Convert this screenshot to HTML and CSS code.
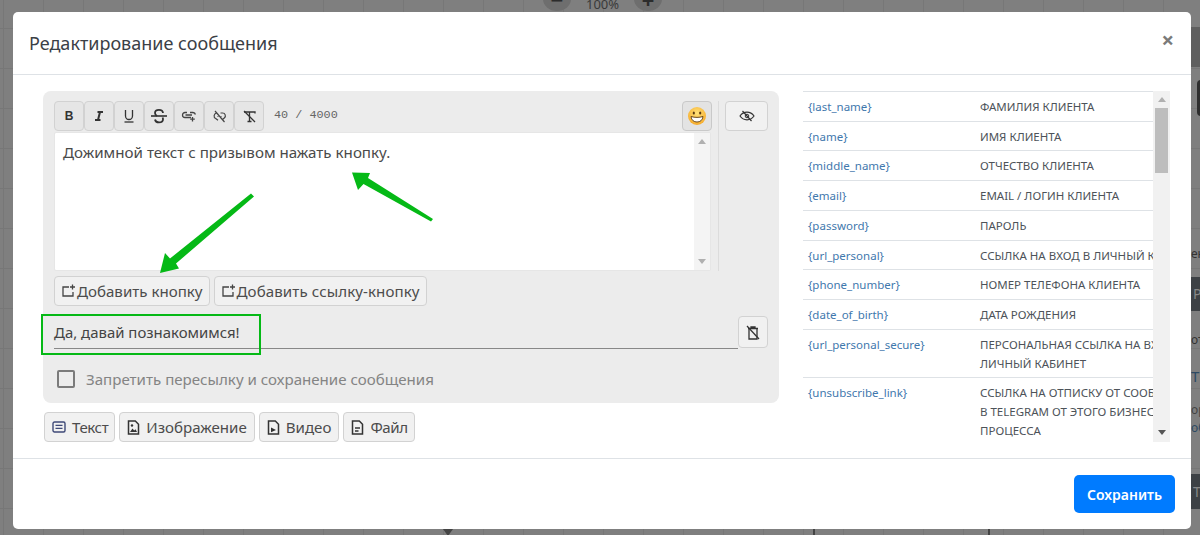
FILE: index.html
```html
<!DOCTYPE html>
<html lang="ru">
<head>
<meta charset="utf-8">
<title>Редактирование сообщения</title>
<link rel="stylesheet" href="styles.css">
</head>
<body>
<div class="backdrop">
  <div class="bg-zoom"><span class="bg-circle">−</span><span class="bg-pct">100%</span><span class="bg-circle">+</span></div>
  <div class="bg-band b1"></div>
  <div class="bg-pill"></div>
  <div class="bg-text t0">ек</div>
  <div class="bg-band b2">Р</div>
  <div class="bg-text t1">от</div>
  <div class="bg-text t2">Т</div>
  <div class="bg-text t3">ор</div>
  <div class="bg-text t4">об</div>
  <div class="bg-band b3">Т</div>
  <div class="bg-tri"></div>
  <div class="bg-tick k1"></div>
  <div class="bg-tick k2"></div>
</div>
<main class="modal">
  <header class="modal-head">
    <h1 class="modal-title">Редактирование сообщения</h1>
    <span class="close">×</span>
  </header>
  <section class="modal-body">
    <div class="col-left">
      <div class="panel">
        <div class="panel-top">
          <div class="editor-col">
            <div class="toolbar">
              <button class="tb"><b class="fb">B</b></button>
              <button class="tb"><svg width="14" height="14" viewBox="0 0 14 14"><path d="M5.500 3h5.500M3 11h5.500M8 3 6 11" fill="none" stroke="#333" stroke-width="2"/></svg></button>
              <button class="tb"><svg width="14" height="16" viewBox="0 0 14 16"><path d="M3.500 2v6a3.500 3.500 0 0 0 7 0V2" fill="none" stroke="#333" stroke-width="1.300"/><path d="M2.500 14h9" stroke="#333" stroke-width="1.300"/></svg></button>
              <button class="tb"><svg width="18" height="18" viewBox="0 0 18 18"><path d="M1 9h16" stroke="#333" stroke-width="1.600"/><path d="M13 6C12.800 3.800 11 2.800 9 2.800 6.500 2.800 5 4.200 5 6c0 1.300.8 2.200 2 3M5 12.500C5.300 14.500 7 15.400 9 15.400c2.500 0 4-1.400 4-3.200 0-.6-.2-1.200-.4-1.700" fill="none" stroke="#333" stroke-width="1.800"/></svg></button>
              <button class="tb"><svg width="16" height="12" viewBox="0 0 16 12"><path d="M6 2.500H4a2.500 2.500 0 0 0 0 5h6" fill="none" stroke="#444" stroke-width="1.300"/><path d="M4.500 5H11M9 2.500h3a2.500 2.500 0 0 1 2.400 2M11.500 7v4.500M9.200 9.200h4.600" fill="none" stroke="#444" stroke-width="1.300"/></svg></button>
              <button class="tb"><svg width="15" height="15" viewBox="0 0 15 15"><path d="M3 2l9.500 11" stroke="#444" stroke-width="1.200"/><path d="M4.500 4.200a2.800 2.800 0 0 0-.8 5.300l2.300 1.800M8.500 4h2a2.800 2.800 0 0 1 1.800 5L10.500 10.500M5.500 7.500h1M8.500 7.500h1" fill="none" stroke="#444" stroke-width="1.200"/></svg></button>
              <button class="tb"><svg width="15" height="15" viewBox="0 0 15 15"><path d="M2 3h11v1.500M7.500 3v9.500M5.500 12.500h4" fill="none" stroke="#333" stroke-width="1.300"/><path d="M2 2l11 11" stroke="#333" stroke-width="1.300"/></svg></button>
              <span class="counter">40 / 4000</span>
              <button class="tb emoji"><svg width="20" height="20" viewBox="0 0 20 20"><defs><radialGradient id="face" cx="50%" cy="35%" r="70%"><stop offset="0" stop-color="#ffe27a"/><stop offset="1" stop-color="#f5a623"/></radialGradient></defs><circle cx="10" cy="10" r="9" fill="url(#face)"/><ellipse cx="6.800" cy="7" rx="1.100" ry="1.600" fill="#5b3a10"/><ellipse cx="13.200" cy="7" rx="1.100" ry="1.600" fill="#5b3a10"/><path d="M4 10.500c3.800 1.200 8.200 1.200 12 0-.3 3.600-2.800 5.500-6 5.500s-5.700-1.900-6-5.500z" fill="#fff" stroke="#5b3a10" stroke-width=".9"/></svg></button>
            </div>
            <div class="editor">
              <p class="editor-text">Дожимной текст с призывом нажать кнопку.</p>
              <div class="ed-scroll"><i class="arr up"></i><i class="arr down"></i></div>
            </div>
          </div>
          <div class="preview-col">
            <button class="btn eye"><svg width="16" height="12" viewBox="0 0 16 12"><path d="M1 6c1.800-2.600 4-3.800 7-3.800s5.200 1.200 7 3.800c-1.800 2.600-4 3.800-7 3.800S2.800 8.600 1 6z" fill="none" stroke="#333" stroke-width="1.200"/><circle cx="8" cy="6" r="1.800" fill="none" stroke="#333" stroke-width="1"/><path d="M3.500 1l9 10" stroke="#333" stroke-width="1.200"/></svg></button>
          </div>
        </div>
        <div class="add-row">
          <button class="btn add"><svg class="add-ic" width="15" height="14" viewBox="0 0 15 14"><path d="M8 3H2v9h10V8" fill="none" stroke="#444" stroke-width="1.300"/><path d="M11.500 0.500v5M9 3h5" stroke="#444" stroke-width="1.300"/></svg>Добавить кнопку</button>
          <button class="btn add add-long"><svg class="add-ic" width="15" height="14" viewBox="0 0 15 14"><path d="M8 3H2v9h10V8" fill="none" stroke="#444" stroke-width="1.300"/><path d="M11.500 0.500v5M9 3h5" stroke="#444" stroke-width="1.300"/></svg>Добавить ссылку-кнопку</button>
        </div>
        <div class="input-row">
          <div class="btn-input">Да, давай познакомимся!</div>
          <button class="btn del"><svg width="14" height="15" viewBox="0 0 14 15"><path d="M2 3.500h10M5 3.500V2h4v1.500M3 3.500V14h8V3.500" fill="none" stroke="#333" stroke-width="1.300"/><path d="M1 1l12 13" stroke="#333" stroke-width="1.200"/></svg></button>
        </div>
        <label class="check-row"><span class="check"></span><span class="check-label">Запретить пересылку и сохранение сообщения</span></label>
      </div>
      <div class="types">
        <button class="btn type tight"><svg width="14" height="12" viewBox="0 0 14 12"><rect x="1" y="1" width="12" height="10" rx="1.500" fill="none" stroke="#3f4a78" stroke-width="1.400"/><path d="M3.500 4.300h7M3.500 7.300h7" stroke="#3f4a78" stroke-width="1.200"/></svg>Текст</button>
        <button class="btn type"><svg width="13" height="15" viewBox="0 0 13 15"><path d="M1.500 1h6.800l3.200 3.200V14h-10z" fill="none" stroke="#333" stroke-width="1.500"/><path d="M3 12l2.500-3.500 1.700 2 1.300-1.300L10 12z" fill="#333"/><circle cx="5" cy="5.500" r="1.200" fill="#333"/></svg>Изображение</button>
        <button class="btn type"><svg width="13" height="15" viewBox="0 0 13 15"><path d="M1.500 1h6.800l3.200 3.200V14h-10z" fill="none" stroke="#333" stroke-width="1.500"/><path d="M4 7.500l5 2.500-5 2.200z" fill="#333"/></svg>Видео</button>
        <button class="btn type tight"><svg width="13" height="15" viewBox="0 0 13 15"><path d="M1.500 1h6.800l3.200 3.200V14h-10z" fill="none" stroke="#333" stroke-width="1.500"/><path d="M4 8h5M4 11h3.500" stroke="#333" stroke-width="1.300"/></svg>Файл</button>
      </div>
      <div class="mark-box"></div>
    </div>
    <div class="col-right">
      <div class="vars">
        <div class="var"><a class="var-key">{last_name}</a><span class="var-val">ФАМИЛИЯ КЛИЕНТА</span></div>
        <div class="var"><a class="var-key">{name}</a><span class="var-val">ИМЯ КЛИЕНТА</span></div>
        <div class="var"><a class="var-key">{middle_name}</a><span class="var-val">ОТЧЕСТВО КЛИЕНТА</span></div>
        <div class="var"><a class="var-key">{email}</a><span class="var-val">EMAIL / ЛОГИН КЛИЕНТА</span></div>
        <div class="var"><a class="var-key">{password}</a><span class="var-val">ПАРОЛЬ</span></div>
        <div class="var"><a class="var-key">{url_personal}</a><span class="var-val">ССЫЛКА НА ВХОД В ЛИЧНЫЙ КАБИНЕТ</span></div>
        <div class="var"><a class="var-key">{phone_number}</a><span class="var-val">НОМЕР ТЕЛЕФОНА КЛИЕНТА</span></div>
        <div class="var"><a class="var-key">{date_of_birth}</a><span class="var-val">ДАТА РОЖДЕНИЯ</span></div>
        <div class="var"><a class="var-key">{url_personal_secure}</a><span class="var-val">ПЕРСОНАЛЬНАЯ ССЫЛКА НА ВХОД В<br>ЛИЧНЫЙ КАБИНЕТ</span></div>
        <div class="var"><a class="var-key">{unsubscribe_link}</a><span class="var-val">ССЫЛКА НА ОТПИСКУ ОТ СООБЩЕНИЙ<br>В TELEGRAM ОТ ЭТОГО БИЗНЕС-<br>ПРОЦЕССА</span></div>
      </div>
      <div class="vscroll"><i class="arr up"></i><div class="thumb"></div><i class="arr down dark"></i></div>
    </div>
  </section>
  <footer class="modal-foot"><button class="save">Сохранить</button></footer>
</main>
<svg class="arrows" width="1200" height="535" viewBox="0 0 1200 535">
  <path d="M433 219 368 178 370 173 352 172.500 358 190 363.500 184 431 221.500z" fill="#05b916"/>
  <path d="M254 196.500 176 263.500 179 268.500 160 273 165 253 170 258.500 251 193.500z" fill="#05b916"/>
</svg>
</body>
</html>
```

FILE: styles.css
```css
* { box-sizing: border-box; }
html, body { margin: 0; padding: 0; }
body {
  width: 1200px;
  height: 535px;
  overflow: hidden;
  background: #7f7f7f;
  font-family: "Noto Sans", "Open Sans", sans-serif;
  color: #495057;
  position: relative;
  padding: 12px 9px 6px 13px;
}
button { font-family: inherit; margin: 0; padding: 0; cursor: pointer; }

/* page dimmed behind the dialog */
.backdrop {
  position: absolute;
  inset: 0;
  overflow: hidden;
  background-image:
    linear-gradient(#777 1px, transparent 1px),
    linear-gradient(90deg, #777 1px, transparent 1px);
  background-size: 40px 40px;
  background-position: 0 28px, 3px 0;
}
.bg-zoom { position: absolute; left: 543px; top: -13px; height: 24px; display: flex; align-items: flex-start; gap: 15px; font-size: 14px; }
.bg-circle { width: 28px; height: 24px; border-radius: 50%; background: #6e6e6e; font-size: 22px; font-weight: 700; text-align: center; line-height: 24px; color: #2c2c2c; }
.bg-pct { color: #3a3a3a; font-size: 13px; line-height: 19px; margin-top: 8px; width: 33px; }
.bg-band { position: absolute; left: 1191px; width: 9px; background: #5f5f5f; font-size: 14px; padding-left: 2px; }
.b1 { top: 27px; height: 40px; }
.b2 { top: 277px; height: 34px; line-height: 34px; background: #3d4145; color: #888; }
.b3 { top: 474px; height: 35px; line-height: 35px; background: #3d4145; color: #888; }
.bg-pill { position: absolute; left: 1197px; top: 80px; width: 10px; height: 36px; border-radius: 4px; background: #2e2e2e; }
.bg-text { position: absolute; left: 1191px; color: #333; font-size: 12px; white-space: nowrap; }
.t0 { top: 245px; }
.t1 { top: 331px; }
.t2 { top: 366px; font-size: 15px; color: #2d4a63; }
.t3 { top: 401px; color: #444; }
.t4 { top: 419px; color: #2d4a63; }
.bg-tri { position: absolute; left: 443px; top: 529px; border: 5px solid transparent; border-top: 7px solid #444; border-bottom: 0; }
.bg-tick { position: absolute; top: 529px; width: 2px; height: 6px; background: #444; }
.k1 { left: 813px; }
.k2 { left: 988px; }

/* dialog */
.modal {
  position: relative;
  width: 1178px;
  height: 517px;
  background: #fff;
  border-radius: 5px;
  display: flex;
  flex-direction: column;
}
.modal-head {
  height: 63px;
  flex: none;
  border-bottom: 1px solid #dee2e6;
  display: flex;
  align-items: center;
  justify-content: space-between;
  padding: 0 17px 0 16px;
}
.modal-title { margin: 2px 0 0; font-size: 18px; font-weight: 400; color: #3b4046; line-height: 1.2; }
.close { font-size: 22px; font-weight: 700; color: #7a7a7a; line-height: 1; margin-bottom: 8px; }
.modal-body { flex: none; height: 384px; display: flex; padding: 16px 0 0 30px; gap: 24px; border-bottom: 1px solid #dee2e6; }
.modal-foot { flex: 1; display: flex; justify-content: flex-end; align-items: flex-start; padding: 16px 16px 0 0; }
.save { width: 101px; height: 38px; border: 0; border-radius: 5px; background: #007bff; color: #fff; font-size: 14px; font-weight: 600; }

/* left column */
.col-left { width: 736px; flex: none; position: relative; }
.panel { background: #ececec; border-radius: 8px; height: 312px; padding: 10px 11px 0; }
.panel-top { display: flex; height: 170px; }
.editor-col { width: 658px; flex: none; }
.toolbar { display: flex; height: 31px; align-items: flex-start; }
.tb { width: 30px; height: 30px; background: #e6e6e6; border: 1px solid #d2d2d2; border-radius: 4px; display: flex; align-items: center; justify-content: center; color: #333; }
.fb { font-size: 12px; font-weight: 700; font-family: "Liberation Sans", sans-serif; }
.counter { font-family: "Liberation Mono", monospace; font-size: 11.800px; color: #666; margin-left: 10px; line-height: 29px; flex: 1; }
.emoji { background: #e3e3e3; border-color: #c9c9c9; }
.editor { height: 139px; width: 657px; background: #fff; display: flex; justify-content: space-between; border: 1px solid #e6e6e6; border-radius: 2px; }
.editor-text { margin: 0; padding: 9px 8px; font-size: 15.150px; line-height: 20px; color: #4a4a4a; }
.ed-scroll { width: 16px; flex: none; background: #f4f4f4; display: flex; flex-direction: column; justify-content: space-between; padding: 6px 0; align-items: center; }
.arr { display: block; border: 4px solid transparent; }
.arr.up { border-top: 0; border-bottom: 5px solid #b0b0b0; }
.arr.down { border-bottom: 0; border-top: 5px solid #b0b0b0; }
.arr.dark { border-top-color: #555; }
.preview-col { flex: 1; margin-left: 6px; border-left: 1px solid #dcdcdc; padding-left: 6px; }
.btn { background: #f1f1f1; border: 1px solid #d2d2d2; border-radius: 4px; color: #495057; display: inline-flex; align-items: center; justify-content: center; }
.eye { width: 43px; height: 30px; }
.add-row { display: flex; gap: 4px; margin-top: 5px; }
.add { height: 30px; font-size: 15.100px; padding: 0 6px; color: #4c4c4c; }
.add-long { letter-spacing: .09px; }
.add-ic { margin-right: 1px; }
.input-row { display: flex; align-items: flex-start; margin-top: 10px; height: 33px; }
.btn-input { flex: 1; height: 33px; border-bottom: 1px solid #888; font-size: 14.950px; line-height: 33px; color: #444; }
.del { width: 30px; height: 32px; flex: none; }
.check-row { display: flex; align-items: center; margin: 20px 0 0 3px; }
.check { width: 18px; height: 18px; border: 2px solid #7b7b7b; border-radius: 2px; flex: none; }
.check-label { margin-left: 11px; font-size: 15.100px; color: #848484; line-height: 20px; }
.types { display: flex; gap: 4px; margin: 9px 0 0 1px; }
.type { height: 30px; font-size: 15.100px; padding: 0 7px; gap: 6px; color: #4c4c4c; }
.tight { letter-spacing: -.4px; padding-right: 6px; }
.mark-box { position: absolute; left: -2px; top: 223px; width: 220px; height: 41px; border: 2px solid #05b916; }

/* right column */
.col-right { width: 367px; height: 351px; flex: none; display: flex; overflow: hidden; }
.vars { width: 350px; flex: none; overflow: hidden; border-top: 1px solid #dee2e6; }
.var { display: flex; padding: 6px 4px 3.800px 5px; border-bottom: 1px solid #dee2e6; font-size: 11.500px; line-height: 18.900px; overflow: hidden; }
.var-key { width: 172px; flex: none; color: #3f78ad; }
.var-val { color: #4d5359; white-space: nowrap; }
.vscroll { width: 17px; flex: none; background: #f1f1f1; display: flex; flex-direction: column; align-items: center; padding: 6px 2px 7px; }
.thumb { width: 13px; height: 65px; background: #bdbdbd; margin-top: 6px; flex: none; }
.vscroll .down { margin-top: auto; }

/* annotations drawn over the screenshot */
.arrows { position: absolute; left: 0; top: 0; pointer-events: none; }
```
